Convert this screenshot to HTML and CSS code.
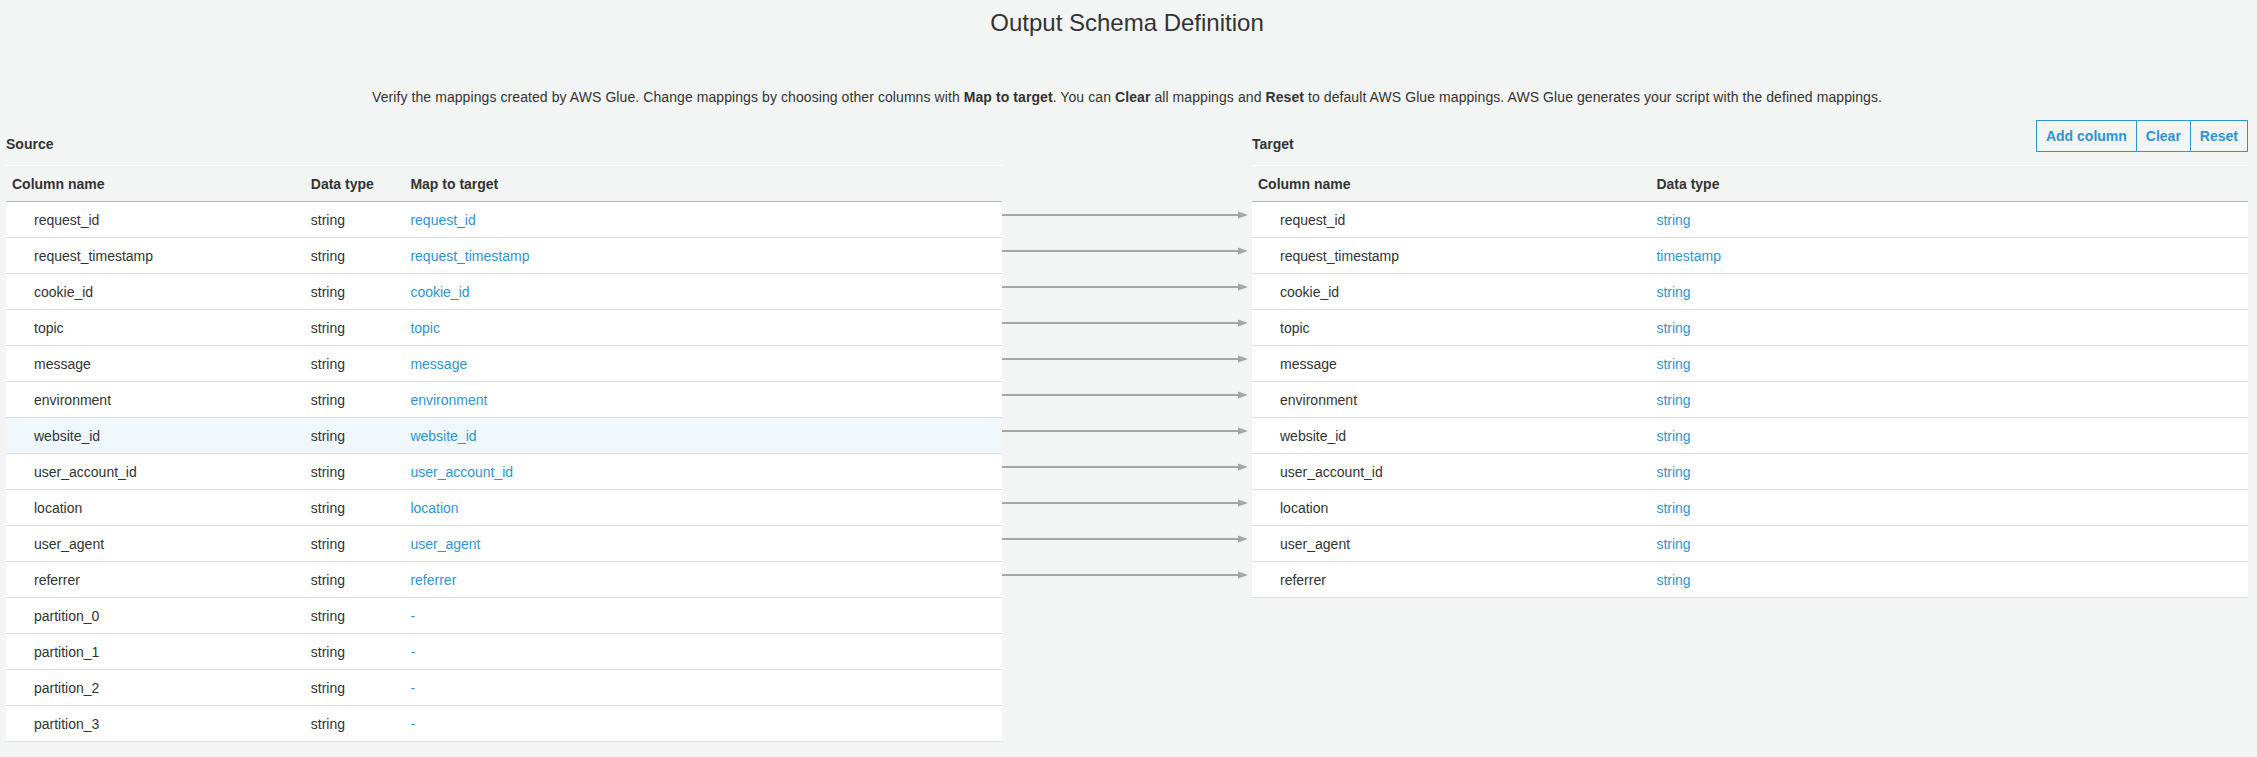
FILE: index.html
```html
<!DOCTYPE html>
<html lang="en">
<head>
<meta charset="utf-8">
<title>Output Schema Definition</title>
<link rel="stylesheet" href="styles.css">
</head>
<body>
<div class="page">
  <h1 class="title">Output Schema Definition</h1>
  <p class="desc">Verify the mappings created by AWS Glue. Change mappings by choosing other columns with <b>Map to target</b>. You can <b>Clear</b> all mappings and <b>Reset</b> to default AWS Glue mappings. AWS Glue generates your script with the defined mappings.</p>

  <div class="mapping">
    <section class="panel">
      <div class="panel-head"><h2 class="panel-title">Source</h2></div>
      <table class="grid">
        <colgroup><col class="c30"><col class="c10"><col class="c60"></colgroup>
        <thead><tr><th>Column name</th><th>Data type</th><th>Map to target</th></tr></thead>
        <tbody>
          <tr><td class="name">request_id</td><td>string</td><td><a class="link">request_id</a></td></tr>
          <tr><td class="name">request_timestamp</td><td>string</td><td><a class="link">request_timestamp</a></td></tr>
          <tr><td class="name">cookie_id</td><td>string</td><td><a class="link">cookie_id</a></td></tr>
          <tr><td class="name">topic</td><td>string</td><td><a class="link">topic</a></td></tr>
          <tr><td class="name">message</td><td>string</td><td><a class="link">message</a></td></tr>
          <tr><td class="name">environment</td><td>string</td><td><a class="link">environment</a></td></tr>
          <tr class="is-hover"><td class="name">website_id</td><td>string</td><td><a class="link">website_id</a></td></tr>
          <tr><td class="name">user_account_id</td><td>string</td><td><a class="link">user_account_id</a></td></tr>
          <tr><td class="name">location</td><td>string</td><td><a class="link">location</a></td></tr>
          <tr><td class="name">user_agent</td><td>string</td><td><a class="link">user_agent</a></td></tr>
          <tr><td class="name">referrer</td><td>string</td><td><a class="link">referrer</a></td></tr>
          <tr><td class="name">partition_0</td><td>string</td><td><a class="link">-</a></td></tr>
          <tr><td class="name">partition_1</td><td>string</td><td><a class="link">-</a></td></tr>
          <tr><td class="name">partition_2</td><td>string</td><td><a class="link">-</a></td></tr>
          <tr><td class="name">partition_3</td><td>string</td><td><a class="link">-</a></td></tr>
        </tbody>
      </table>
    </section>

    <div class="arrows">
      <div class="arrow-row"><svg width="250" height="36" viewBox="0 0 250 36"><line x1="0" y1="13" x2="238" y2="13"/><polygon points="236,9.5 246,13 236,16.5"/></svg></div>
      <div class="arrow-row"><svg width="250" height="36" viewBox="0 0 250 36"><line x1="0" y1="13" x2="238" y2="13"/><polygon points="236,9.5 246,13 236,16.5"/></svg></div>
      <div class="arrow-row"><svg width="250" height="36" viewBox="0 0 250 36"><line x1="0" y1="13" x2="238" y2="13"/><polygon points="236,9.5 246,13 236,16.5"/></svg></div>
      <div class="arrow-row"><svg width="250" height="36" viewBox="0 0 250 36"><line x1="0" y1="13" x2="238" y2="13"/><polygon points="236,9.5 246,13 236,16.5"/></svg></div>
      <div class="arrow-row"><svg width="250" height="36" viewBox="0 0 250 36"><line x1="0" y1="13" x2="238" y2="13"/><polygon points="236,9.5 246,13 236,16.5"/></svg></div>
      <div class="arrow-row"><svg width="250" height="36" viewBox="0 0 250 36"><line x1="0" y1="13" x2="238" y2="13"/><polygon points="236,9.5 246,13 236,16.5"/></svg></div>
      <div class="arrow-row"><svg width="250" height="36" viewBox="0 0 250 36"><line x1="0" y1="13" x2="238" y2="13"/><polygon points="236,9.5 246,13 236,16.5"/></svg></div>
      <div class="arrow-row"><svg width="250" height="36" viewBox="0 0 250 36"><line x1="0" y1="13" x2="238" y2="13"/><polygon points="236,9.5 246,13 236,16.5"/></svg></div>
      <div class="arrow-row"><svg width="250" height="36" viewBox="0 0 250 36"><line x1="0" y1="13" x2="238" y2="13"/><polygon points="236,9.5 246,13 236,16.5"/></svg></div>
      <div class="arrow-row"><svg width="250" height="36" viewBox="0 0 250 36"><line x1="0" y1="13" x2="238" y2="13"/><polygon points="236,9.5 246,13 236,16.5"/></svg></div>
      <div class="arrow-row"><svg width="250" height="36" viewBox="0 0 250 36"><line x1="0" y1="13" x2="238" y2="13"/><polygon points="236,9.5 246,13 236,16.5"/></svg></div>
    </div>

    <section class="panel">
      <div class="panel-head">
        <h2 class="panel-title">Target</h2>
        <div class="btn-group">
          <button class="btn">Add column</button><button class="btn">Clear</button><button class="btn">Reset</button>
        </div>
      </div>
      <table class="grid">
        <colgroup><col class="c40"><col class="c60"></colgroup>
        <thead><tr><th>Column name</th><th>Data type</th></tr></thead>
        <tbody>
          <tr><td class="name">request_id</td><td><a class="link">string</a></td></tr>
          <tr><td class="name">request_timestamp</td><td><a class="link">timestamp</a></td></tr>
          <tr><td class="name">cookie_id</td><td><a class="link">string</a></td></tr>
          <tr><td class="name">topic</td><td><a class="link">string</a></td></tr>
          <tr><td class="name">message</td><td><a class="link">string</a></td></tr>
          <tr><td class="name">environment</td><td><a class="link">string</a></td></tr>
          <tr><td class="name">website_id</td><td><a class="link">string</a></td></tr>
          <tr><td class="name">user_account_id</td><td><a class="link">string</a></td></tr>
          <tr><td class="name">location</td><td><a class="link">string</a></td></tr>
          <tr><td class="name">user_agent</td><td><a class="link">string</a></td></tr>
          <tr><td class="name">referrer</td><td><a class="link">string</a></td></tr>
        </tbody>
      </table>
    </section>
  </div>
</div>
</body>
</html>
```

FILE: styles.css
```css
html, body {
  margin: 0;
  padding: 0;
  background: #f3f4f4;
}
body {
  font-family: "Liberation Sans", Arial, Helvetica, sans-serif;
  font-size: 14px;
  color: #333;
}
.page {
  padding: 9px 9px 0 6px;
}
.title {
  margin: 0;
  font-size: 24px;
  line-height: 28px;
  font-weight: 400;
  color: #333;
  text-align: center;
}
.desc {
  margin: 50px 0 0;
  line-height: 20px;
  text-align: center;
  color: #333;
  letter-spacing: 0.08px;
}
.desc b {
  font-weight: 700;
}
.mapping {
  margin-top: 13px;
  display: grid;
  grid-template-columns: 996px 250px 996px;
  align-items: start;
}
.panel-head {
  height: 45px;
  display: flex;
  justify-content: space-between;
  align-items: flex-start;
}
.panel-title {
  margin: 0;
  padding-top: 14px;
  font-size: 14px;
  line-height: 20px;
  font-weight: 700;
  color: #333;
}
.btn-group {
  display: flex;
}
.btn {
  height: 32px;
  margin: 0 0 0 -1px;
  padding: 0 9px;
  border: 1px solid #2e95d3;
  background: transparent;
  color: #2e95d3;
  font-family: "Liberation Sans", Arial, Helvetica, sans-serif;
  font-size: 14px;
  font-weight: 700;
  line-height: 30px;
}
.grid {
  width: 100%;
  border-collapse: collapse;
  table-layout: fixed;
}
.c30 { width: 30%; }
.c10 { width: 10%; }
.c40 { width: 40%; }
.c60 { width: 60%; }
.grid th {
  text-align: left;
  font-weight: 700;
  color: #333;
  padding: 8px 6px 7px;
  line-height: 20px;
  border-top: 1px solid #fdfdfd;
  border-bottom: 1px solid #b9b9b9;
}
.grid td {
  background: #fff;
  padding: 8px 6px 7px;
  line-height: 20px;
  color: #333;
  border-bottom: 1px solid #dcdcdc;
  white-space: nowrap;
}
.grid td.name {
  padding-left: 28px;
}
.grid tr.is-hover td {
  background: #eff7fd;
}
.link {
  color: #2e95d3;
  text-decoration: none;
}
.arrows {
  padding-top: 82px;
}
.arrow-row {
  height: 36px;
}
.arrow-row svg {
  display: block;
}
.arrow-row line {
  stroke: #a6a6a6;
  stroke-width: 2;
}
.arrow-row polygon {
  fill: #a6a6a6;
}
```
